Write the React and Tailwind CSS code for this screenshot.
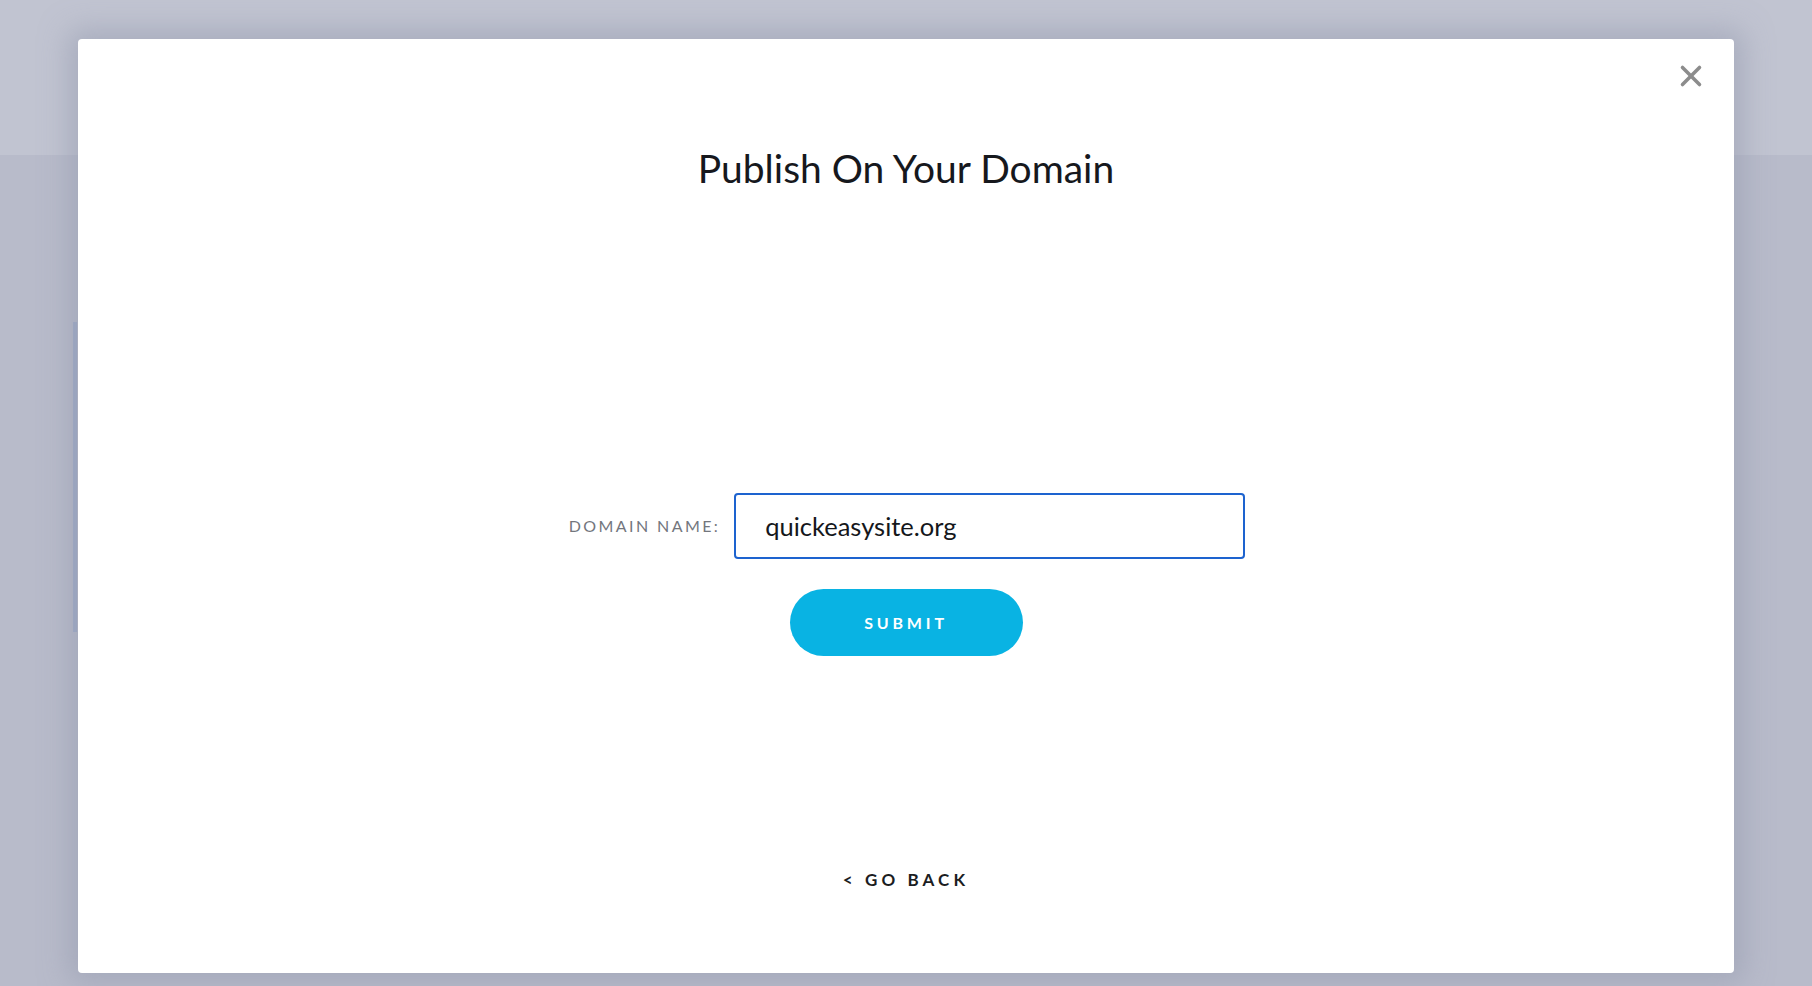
import React, { useState } from 'react';
import { X } from 'lucide-react';

export default function App() {
  const [domain, setDomain] = useState('quickeasysite.org');

  return (
    <div className="relative h-screen w-full overflow-hidden bg-[#b8bbca]" style={{ fontFamily: 'Lato, "Open Sans", sans-serif' }}>
      {/* Background page behind overlay */}
      <div className="h-[155px] bg-[#c1c4d1]" />
      <div className="absolute left-[73px] top-[322px] h-[310px] w-[4px] bg-[#9fabc8]" />

      {/* Modal */}
      <div className="absolute inset-0 pt-[39px] pb-[13px] px-[78px]">
        <div className="relative flex h-full flex-col items-center rounded-[4px] bg-white shadow-[0_0_28px_10px_rgba(150,154,175,0.55)]">
          <button className="absolute right-[26px] top-[20px] text-[#8c8c8c] hover:text-[#555]">
            <X className="h-[34px] w-[34px]" strokeWidth={2.5} />
          </button>

          <h1 className="pt-[104px] text-[39px] leading-[50px] font-normal text-[#16181d]">
            Publish On Your Domain
          </h1>

          <div className="mt-[300px] flex items-center gap-[14px] translate-x-[1px]">
            <label className="text-[16px] tracking-[0.15em] text-[#73767d]">
              DOMAIN NAME:
            </label>
            <input
              autoFocus
              value={domain}
              onChange={(e) => setDomain(e.target.value)}
              className="h-[66px] w-[511px] rounded-[4px] border-2 border-[#1d63cf] px-[29px] text-[25.5px] text-[#15171b] caret-[#15171b] outline-none"
            />
          </div>

          <button className="mt-[30px] h-[67px] w-[233px] rounded-full bg-[#09b3e3] text-[16px] font-bold tracking-[0.24em] text-white hover:bg-[#07a3cf]">
            SUBMIT
          </button>

          <button className="mt-[211px] text-[17px] font-bold tracking-[0.24em] text-[#1b1d22]">
            &lt; GO BACK
          </button>
        </div>
      </div>
    </div>
  );
}
